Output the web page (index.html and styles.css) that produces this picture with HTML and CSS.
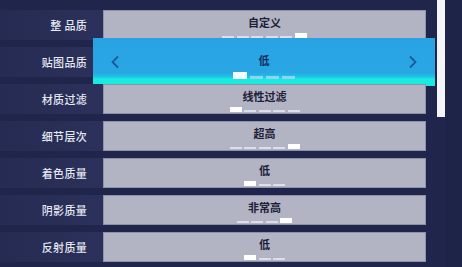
FILE: index.html
```
<!DOCTYPE html>
<html>
<head>
<meta charset="utf-8">
<link rel="stylesheet" href="styles.css">
</head>
<body>
<div class="page">
  <div class="list">
    <div class="row">
      <div class="label">整 品质</div>
      <div class="panel">
        <div class="value">自定义</div>
        <div class="slider"><i></i><i></i><i></i><i></i><i></i><i class="on"></i></div>
      </div>
    </div>
    <div class="row">
      <div class="label">贴图品质</div>
      <div class="panel"></div>
      <div class="popup">
        <svg class="chev" width="10" height="14" viewBox="0 0 10 14"><path d="M8 1.5 L2.5 7 L8 12.5" fill="none" stroke="#1b5a98" stroke-width="1.8"/></svg>
        <div class="pop-center">
          <div class="pop-value">低</div>
          <div class="slider big"><i class="on"></i><i></i><i></i><i></i></div>
        </div>
        <svg class="chev" width="10" height="14" viewBox="0 0 10 14"><path d="M2 1.5 L7.5 7 L2 12.5" fill="none" stroke="#1b5a98" stroke-width="1.8"/></svg>
      </div>
    </div>
    <div class="row">
      <div class="label">材质过滤</div>
      <div class="panel">
        <div class="value">线性过滤</div>
        <div class="slider"><i class="on"></i><i></i><i></i><i></i><i></i></div>
      </div>
    </div>
    <div class="row">
      <div class="label">细节层次</div>
      <div class="panel">
        <div class="value">超高</div>
        <div class="slider"><i></i><i></i><i></i><i></i><i class="on"></i></div>
      </div>
    </div>
    <div class="row">
      <div class="label">着色质量</div>
      <div class="panel">
        <div class="value">低</div>
        <div class="slider"><i class="on"></i><i></i><i></i></div>
      </div>
    </div>
    <div class="row">
      <div class="label">阴影质量</div>
      <div class="panel">
        <div class="value">非常高</div>
        <div class="slider"><i></i><i></i><i></i><i class="on"></i></div>
      </div>
    </div>
    <div class="row">
      <div class="label">反射质量</div>
      <div class="panel">
        <div class="value">低</div>
        <div class="slider"><i class="on"></i><i></i><i></i></div>
      </div>
    </div>
  </div>
  <div class="scroll"><div class="thumb"></div></div>
  <div class="edge"></div>
</div>
</body>
</html>
```
FILE: styles.css
```
* { box-sizing: border-box; }
html, body { margin: 0; padding: 0; }
body {
  width: 462px;
  height: 267px;
  overflow: hidden;
  background: #20264b;
  font-family: "Noto Sans CJK SC", "Noto Sans", sans-serif;
}
.page {
  display: flex;
  height: 267px;
}
.list {
  width: 437px;
  padding-top: 10px;
  display: flex;
  flex-direction: column;
  gap: 7px;
}
.row {
  position: relative;
  display: flex;
  height: 30px;
}
.label {
  width: 103px;
  height: 30px;
  background: linear-gradient(to right, #252b52, #2b315a);
  color: #e6e8f2;
  font-size: 11px;
  font-weight: 500;
  text-align: right;
  padding-right: 16px;
  line-height: 30px;
  letter-spacing: 0.3px;
}
.panel {
  width: 323px;
  height: 30px;
  background: #b2b4c3;
  border: 1px solid #8e91a8;
  display: flex;
  flex-direction: column;
  align-items: center;
  justify-content: space-between;
  padding: 4px 0 1px;
}
.value {
  color: #1c2038;
  font-size: 11px;
  font-weight: 700;
  line-height: 15px;
}
.slider {
  display: flex;
  align-items: flex-end;
  gap: 2.5px;
  height: 5px;
}
.slider i {
  display: block;
  width: 12px;
  height: 2px;
  background: #dcdfe9;
}
.slider i.on {
  height: 5px;
  background: #ffffff;
}
.popup {
  position: absolute;
  left: 93px;
  top: -9px;
  width: 342px;
  height: 48px;
  background: linear-gradient(to bottom, #29a2e4 0px, #29a6e4 35px, #22c4e6 39px, #18ece0 41px, #17eadf 48px);
  display: flex;
  align-items: center;
  justify-content: space-between;
  padding: 0 17px;
}
.chev { display: block; }
.pop-center {
  align-self: flex-start;
  display: flex;
  flex-direction: column;
  align-items: center;
  gap: 4px;
  padding-top: 14px;
}
.pop-value {
  color: #0e2f5c;
  font-size: 11px;
  font-weight: 700;
  line-height: 16px;
}
.slider.big {
  height: 7px;
  gap: 3px;
}
.slider.big i {
  width: 13px;
  height: 3px;
  background: #8fd4f2;
}
.slider.big i.on {
  width: 14px;
  height: 7px;
  background: #f4fbff;
}
.scroll {
  width: 8px;
  height: 267px;
}
.thumb {
  width: 8px;
  height: 117px;
  background: #f4f5fa;
}
.edge {
  flex: 1;
  background: #1e2447;
}
```
